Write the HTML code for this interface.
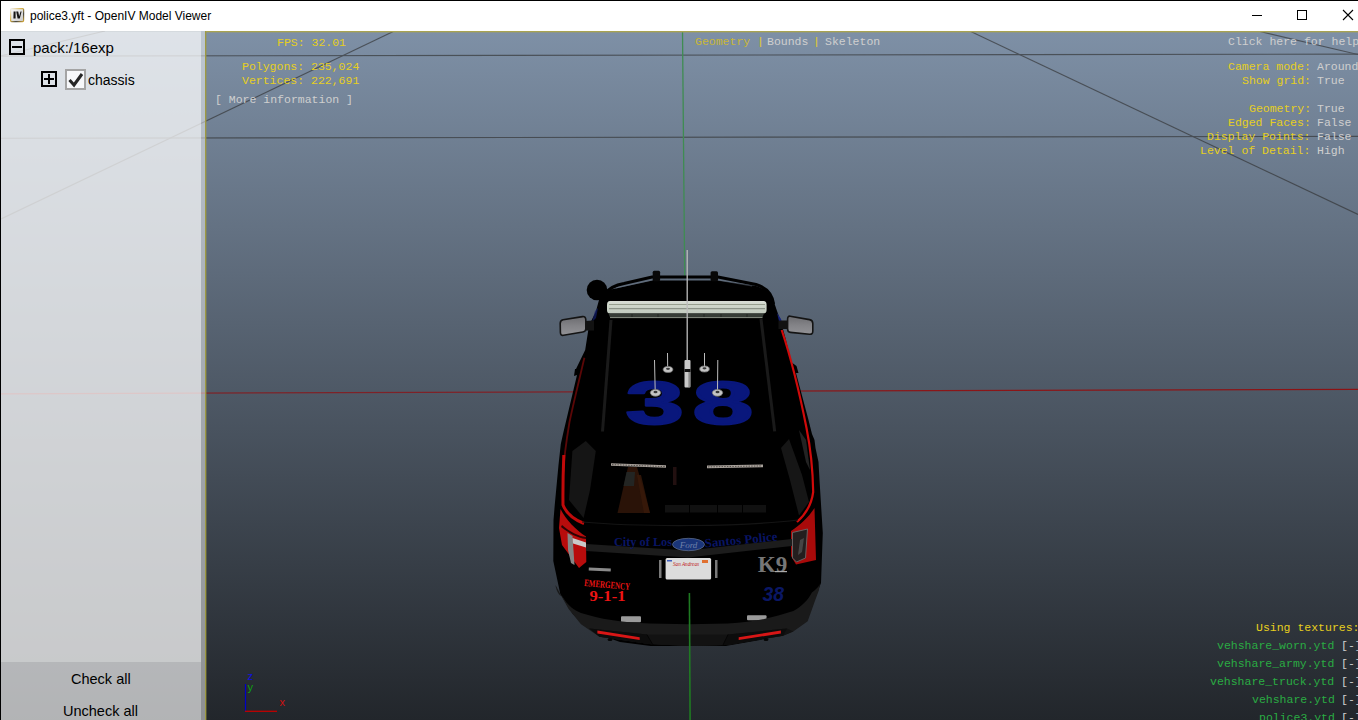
<!DOCTYPE html>
<html><head><meta charset="utf-8">
<style>
html,body{margin:0;padding:0;}
body{width:1358px;height:720px;overflow:hidden;position:relative;background:#fff;font-family:"Liberation Sans",sans-serif;}
.a{position:absolute;white-space:pre;}
.m{position:absolute;white-space:pre;font-family:"Liberation Mono",monospace;font-size:11.5px;line-height:14px;}
.y{color:#e6cf1e;}
.g{color:#cfcfcf;}
.gr{color:#2aac43;}
</style></head><body>
<!-- title bar -->
<div class="a" style="left:0;top:0;width:1358px;height:1px;background:#000"></div>
<div class="a" style="left:0;top:0;width:1px;height:720px;background:#000;z-index:9"></div>
<svg class="a" style="left:10px;top:8px" width="15" height="15" viewBox="0 0 15 15">
  <defs>
    <linearGradient id="icf" x1="0" y1="0" x2="1" y2="1"><stop offset="0" stop-color="#fafafa"/><stop offset="1" stop-color="#c8c8c8"/></linearGradient>
    <linearGradient id="icb" x1="0" y1="0" x2="1" y2="1"><stop offset="0" stop-color="#f0f0f0"/><stop offset="0.45" stop-color="#d8b040"/><stop offset="0.7" stop-color="#444"/><stop offset="1" stop-color="#d4a838"/></linearGradient>
  </defs>
  <rect x="0.6" y="0.6" width="13" height="13" rx="1" fill="url(#icf)" stroke="url(#icb)" stroke-width="1.2"/>
  <path d="M3.6,3.4 L5.6,3.4 L5.6,10.5 L3.4,10.5 Z M6.2,3.4 L8.2,3.4 L9.2,8.2 L10.5,3.4 L11.6,3.4 L9.8,10.5 L7.6,10.5 Z" fill="#151515"/>
</svg>
<div class="a" style="left:30px;top:9px;font-size:12px;color:#000">police3.yft - OpenIV Model Viewer</div>
<!-- window controls -->
<svg class="a" style="left:1240px;top:0" width="118" height="31" viewBox="1240 0 118 31">
  <rect x="1252" y="15" width="10" height="1" fill="#000"/>
  <rect x="1297.5" y="10.5" width="9" height="9" fill="none" stroke="#000" stroke-width="1"/>
  <path d="M1343 10 L1353 20 M1353 10 L1343 20" stroke="#000" stroke-width="1.1"/>
</svg>

<!-- scene -->
<svg class="a" style="left:0;top:31px" width="1358" height="689" viewBox="0 31 1358 689">
  <defs>
    <linearGradient id="bg" gradientUnits="userSpaceOnUse" x1="0" y1="31" x2="0" y2="720">
      <stop offset="0" stop-color="rgb(126,144,166)"/>
      <stop offset="1" stop-color="rgb(34,38,43)"/>
    </linearGradient>
  </defs>
  <rect x="0" y="31" width="1358" height="689" fill="url(#bg)"/>
  <g stroke="#303030" stroke-width="1.15" fill="none" opacity="0.64">
    <line x1="0" y1="56.07" x2="1358" y2="54.13"/>
    <line x1="0" y1="138.27" x2="1358" y2="136.33"/>
    <line x1="0" y1="219.5" x2="394.3" y2="31"/>
    <line x1="970.3" y1="31.3" x2="1358" y2="214.5"/>
    <line x1="0" y1="56" x2="105" y2="31"/>
    <line x1="1258" y1="31" x2="1358" y2="54.5"/>
  </g>
  <linearGradient id="redax" gradientUnits="userSpaceOnUse" x1="0" y1="0" x2="1358" y2="0"><stop offset="0" stop-color="#7a2428"/><stop offset="0.4" stop-color="#7f2127"/><stop offset="0.6" stop-color="#8a1719"/><stop offset="1" stop-color="#8c1214"/></linearGradient>
  <line x1="0" y1="393.79" x2="1358" y2="389.26" stroke="url(#redax)" stroke-width="1.25"/>
  <line x1="682.5" y1="31" x2="684.7" y2="276" stroke="#3f8c52" stroke-width="1.3"/>
  
  <g id="car">
    <defs>
      <linearGradient id="mir" x1="0" y1="0" x2="0" y2="1"><stop offset="0" stop-color="#6c6c70"/><stop offset="0.5" stop-color="#838387"/><stop offset="1" stop-color="#929296"/></linearGradient>
      <linearGradient id="lbar" x1="0" y1="0" x2="0" y2="1"><stop offset="0" stop-color="#d9ded6"/><stop offset="0.4" stop-color="#cdd5c9"/><stop offset="1" stop-color="#c2cbbf"/></linearGradient>
    </defs>
    <!-- body silhouette -->
    <path d="M611,289.5 L652,280.5 L718,280.5 L756,286 C765,289 771,293 773,299 L777,311 L781,322 L786,340 L791,362 L796.5,366 L798.5,373 L796,373 L808.5,420 L812,434 L814.5,440 L815.5,448 L818.5,462 L819.5,480 L822.8,533 L821,583 L816,596 L809,614 L797,626 L786.7,633 L760,640 L725.6,646 L650.6,646 L620,642 L595,633 L589.4,628 L572.8,614 L560.3,594 L553.3,561 L553.5,520 L554.7,505.6 L558.5,465 L560.8,444 L563.6,431.4 L577,375 L574,376 L575,369 L576,368.9 L585.2,350 L589,325.6 L595.8,311.8 L599,300 L603,293 Z" fill="#000000"/>
    <!-- rail -->
    <path d="M606,293 C610,287 616,285 624,283.5 L652,277 L718,277 L756,284.5 C766,287.5 772,293 773.5,304" fill="none" stroke="#000" stroke-width="3.2"/>
    <path d="M616,288 L652,280.2 M718,280.2 L752,286" fill="none" stroke="#6d7888" stroke-width="0.8" opacity="0.55"/>
    <rect x="652.7" y="270.8" width="7.4" height="10.5" rx="1.5" fill="#080808"/>
    <rect x="710.6" y="271.3" width="7.4" height="10" rx="1.5" fill="#080808"/>
    <!-- ball speaker -->
    <circle cx="597" cy="290" r="10.3" fill="#000"/>
    <!-- blue highlights -->
    <path d="M595,311 L598,308 L596,318 L592,322 Z" fill="#101c6a" opacity="0.7"/>
    <path d="M777,313 L781,319 L783,326 L779,321 Z" fill="#14207a"/>
    <!-- mirrors -->
    <path d="M584,321 L594,320.5 L594,330.5 L584,330.5 Z" fill="#121212"/>
    <path d="M778.5,320.5 L788,320.5 L788,329 L778.5,329 Z" fill="#121212"/>
    <path d="M563,319.8 L582.5,316.6 Q585.6,316.2 585.8,319.5 L585.8,329 Q585.8,331.6 582.8,332 L563.5,335.3 Q560.5,335.8 560.4,332.5 L560.2,323.5 Q560.2,320.3 563,319.8 Z" fill="url(#mir)" stroke="#141414" stroke-width="1.6"/>
    <path d="M790.2,316.2 L809.5,319.6 Q812.8,320.2 812.8,323.5 L812.8,331.2 Q812.8,334.6 809.5,334.3 L790.5,332.4 Q787.6,332.2 787.6,329 L787.6,319.2 Q787.6,315.8 790.2,316.2 Z" fill="url(#mir)" stroke="#141414" stroke-width="1.6"/>
    <!-- light bar -->
    <path d="M610,301 L763.5,301 Q766.6,301.2 766.6,305 L766.6,310 Q766.6,313.6 763,313.6 L610,313.6 Q607,313.6 607,310 L607,305 Q607,301 610,301 Z" fill="url(#lbar)"/>
    <line x1="609" y1="304.5" x2="765" y2="304.5" stroke="#88907f" stroke-width="0.8"/>
    <line x1="609" y1="308.7" x2="765" y2="308.7" stroke="#8c9489" stroke-width="1.3"/>
    <path d="M608.5,313.6 L764,313.6 L762.5,317.2 L610,317.2 Z" fill="#363c36"/>
    <g stroke="#1e221e" stroke-width="0.8"><line x1="632" y1="314" x2="632" y2="317"/><line x1="658" y1="314" x2="658" y2="317"/><line x1="704" y1="314" x2="704" y2="317"/><line x1="721" y1="314" x2="721" y2="317"/><line x1="747" y1="314" x2="747" y2="317"/></g>
    <line x1="610" y1="317.6" x2="762.5" y2="317.6" stroke="#98a094" stroke-width="0.9"/>
    <!-- roof creases -->
    <path d="M611,320 L602.5,431.5" stroke="#1a1a1a" stroke-width="3" fill="none"/>
    <path d="M761,319 L774.7,431.4" stroke="#1a1a1a" stroke-width="3" fill="none"/>
    <!-- side red strips upper -->
    
    
    <!-- 38 roof -->
    <g fill="#09177c" stroke="#09177c" stroke-width="2" stroke-linejoin="round">
      <text x="0" y="0" font-family="Liberation Sans" font-weight="bold" font-size="61.4" transform="translate(625.6,424) scale(1.71,1)">3</text>
      <text x="0" y="0" font-family="Liberation Sans" font-weight="bold" font-size="61.4" transform="translate(692.5,424) scale(1.78,1)">8</text>
    </g>
    <!-- C pillar panels -->
    <path d="M585.8,441 L595.8,451 L590,490 L583.6,518 L569,500 L572.4,451 Z" fill="#151515"/>
    <path d="M781,448 L789,439 L802,475 L809,502 L799,515.6 L790,480 Z" fill="#161616"/>
    <!-- rear window inner (slightly lighter glass) -->
    
    <!-- traffic cone dim -->
    <path d="M617.5,513 L628,467 L637,467 L650,513 Z" fill="#2a1308"/>
    <path d="M626.5,472 L635,472 L634,486 L623.5,486 Z" fill="#222a2a" opacity="0.8"/>
    <path d="M637,475 L641,475 L650,513 L644,513 Z" fill="#3a1a0a" opacity="0.8"/>
    <path d="M673,467 L676.5,467 L676.5,485 L673,485 Z" fill="#2a1414" opacity="0.8"/>
    <g fill="#111111"><rect x="665" y="505" width="24" height="7.5"/><rect x="690" y="505" width="27" height="7.5"/><rect x="718" y="505" width="24" height="7.5"/><rect x="743" y="505" width="23" height="7.5"/></g>
    <!-- LED bars -->
    <path d="M611,463.2 L666,465.3 L666,467.8 L611,465.8 Z" fill="#a9a29c"/>
    <path d="M707,465.6 L763,464.6 L763,467.2 L707,468.2 Z" fill="#a9a29c"/>
    <path d="M612,464.6 L665,466.6" stroke="#4a4540" stroke-width="0.9" stroke-dasharray="1.5 1.2"/>
    <path d="M708,466.9 L762,465.9" stroke="#4a4540" stroke-width="0.9" stroke-dasharray="1.5 1.2"/>
    <!-- red side strips -->
    <path d="M781.7,330 C790,355 800,395 806.5,428 C810.5,448 812.8,470 813.2,492 C811.5,505 806,514 797,522" fill="none" stroke="#d00a0a" stroke-width="2.2"/>
    <path d="M799,430 L806,440 L810,470 L806,462 Z" fill="#3a3a3a" opacity="0.6"/>
    <path d="M584.4,357.8 C578,385 573,405 569.5,422 C566.5,440 564,458 563.3,472" fill="none" stroke="#5a0707" stroke-width="1.8"/>
    <path d="M563.8,455 C563,475 562.8,490 563,505 C566.5,514 575,520 584,523.5" fill="none" stroke="#c00a0a" stroke-width="3"/>
    <!-- tail lights -->
    
    
    <path d="M560.5,509 C566,520 576,530 586,536.5 L586.3,562 L579,568 L562,545 L559,528 Z" fill="#b80c0c"/>
    <path d="M567.5,533 L572.5,536 L574.5,565 L571,563 L568,550 Z" fill="#858585"/>
    <path d="M572.5,538 L586,542.5 L586,547.5 L573,543.5 Z" fill="#c9c9c9"/>
    <path d="M562,525 C570,532 578,536 586,537 L586,539 C577,538 569,533 561,527 Z" fill="#2a0404"/>
    
    
    <path d="M814.5,508 L816,560 L796,564.5 L791,556 L791,531 C800,525 808,518 814.5,508 Z" fill="#a80a0a"/>
    <path d="M792.5,532.5 L807.5,529 L805.5,558 L796.5,562 L792.5,558 Z" fill="#241e1e" stroke="#6a6a6a" stroke-width="0.9"/>
    <path d="M800,540 L804,538 L802,552 L798,555 Z" fill="#555" opacity="0.7"/>
    <!-- trim band & text -->
    <path d="M586,544 L688,550.5 L792,539 L792,546 L688,557.5 L586,551 Z" fill="#1c1c1c"/>
    <path d="M582,522 C640,527 740,527 798,520" fill="none" stroke="#141414" stroke-width="1.2"/>
    <text x="614" y="545.5" font-family="Liberation Serif" font-weight="bold" font-size="12.5" fill="#091564" textLength="58" lengthAdjust="spacingAndGlyphs">City of Los</text>
    <text x="0" y="0" font-family="Liberation Serif" font-weight="bold" font-size="12.5" fill="#091564" textLength="73" lengthAdjust="spacingAndGlyphs" transform="translate(705,547.5) rotate(-5.5)">Santos Police</text>
    <ellipse cx="688.5" cy="544.5" rx="16" ry="6.2" fill="#1a357a" stroke="#5a6a8a" stroke-width="0.8"/>
    <text x="688.5" y="547.5" text-anchor="middle" font-family="Liberation Serif" font-style="italic" font-size="9" fill="#6f80a8">Ford</text>
    <!-- plate -->
    <rect x="659" y="560" width="2.5" height="18" fill="#7a7a7a"/>
    <rect x="715" y="560" width="2.5" height="18" fill="#7a7a7a"/>
    <rect x="665.6" y="558" width="45.5" height="21.5" rx="1.5" fill="#dcdcdc"/>
    <text x="673" y="566" font-family="Liberation Serif" font-style="italic" font-size="6.5" fill="#c02020" textLength="26" lengthAdjust="spacingAndGlyphs">San Andreas</text>
    <rect x="702" y="560" width="6" height="3" fill="#e07030"/>
    <rect x="667" y="560" width="5" height="1.5" fill="#4060c0"/>
    <!-- badges -->
    <rect x="588.8" y="568" width="22" height="3" fill="#8a8a8a" transform="rotate(3 600 569)"/>
    <rect x="621" y="616.3" width="20" height="6" rx="1" fill="#9a9a9a"/>
    <rect x="747" y="615.3" width="19.5" height="5" rx="1" fill="#9a9a9a"/>
    <text x="0" y="0" font-family="Liberation Serif" font-weight="bold" font-size="10" fill="#ee1414" textLength="46" lengthAdjust="spacingAndGlyphs" transform="translate(584,586) rotate(5)">EMERGENCY</text>
    <text x="589.5" y="600.5" font-family="Liberation Serif" font-weight="bold" font-size="15" fill="#ee1414" textLength="36" lengthAdjust="spacingAndGlyphs">9-1-1</text>
    <text x="757.8" y="571.8" font-family="Liberation Serif" font-weight="bold" font-size="23" fill="#767676" textLength="29.5" lengthAdjust="spacingAndGlyphs">K9</text>
    <rect x="775" y="571" width="12" height="1.2" fill="#aaa"/>
    <text x="762.5" y="601" font-family="Liberation Sans" font-weight="bold" font-style="italic" font-size="20.5" fill="#0a1764" textLength="21.5" lengthAdjust="spacingAndGlyphs">38</text>
    <!-- lower body lighter band -->
    <path d="M555.5,585 C556,590 559,596 562.4,596.5 C568,606 574,610 581,613 C600,619 620,622.3 650,623.5 L689,624.3 L728,623.5 C756,622 775,617 793.3,611 C802,606 808,600 811.9,592.4 C815,590 818,588 819.8,584 L819,590 L816,598 L807.7,621.2 L793.3,631.5 L783,635.7 L727.3,645 L689,646 L649,643.9 L599.5,636.7 L590.2,630.5 L581,624.3 L568.6,608.9 L560.3,594 Z" fill="#1a1a1a"/>
    <!-- bumper -->
    <path d="M589.2,628.5 L646.9,634.6 L728,634.6 L787,628.5 L793.3,631.5 L783,635.7 L727.3,645 L689,646 L649,643.9 L599.5,636.7 Z" fill="#121212"/>
    <path d="M589.2,628.5 L646.9,634.6 L653,645 L649,643.9 L599.5,636.7 Z" fill="#0c0c0c"/>
    <path d="M787,628.5 L728,634.6 L723,645 L727.3,645 L783,635.7 Z" fill="#0c0c0c"/>
    <path d="M646.9,634.6 L653,645 M728,634.6 L723,645" stroke="#050505" stroke-width="1"/>
    <path d="M597.4,630.5 L639.7,637.3 L639.7,640 L597.4,633.5 Z" fill="#d81616"/>
    <path d="M738.7,637.3 L780.9,630.5 L780.9,633.5 L738.7,640 Z" fill="#d81616"/>
    <ellipse cx="610" cy="639.5" rx="2.5" ry="1.5" fill="#050505"/>
    <ellipse cx="766" cy="639.5" rx="2.5" ry="1.5" fill="#050505"/>
    <!-- antennas -->
    <g stroke="#bdbdbd" fill="none">
      <line x1="687.2" y1="250" x2="687.2" y2="362" stroke-width="1.3"/>
      <line x1="654.5" y1="360" x2="655.2" y2="391" stroke-width="1"/>
      <line x1="667.5" y1="353" x2="667.7" y2="368" stroke-width="1"/>
      <line x1="704.5" y1="353" x2="704.5" y2="368" stroke-width="1"/>
      <line x1="717.8" y1="360" x2="717.5" y2="391" stroke-width="1"/>
    </g>
    <rect x="684.5" y="360" width="6" height="27.5" rx="1" fill="#c9c9c9"/>
    <rect x="684.5" y="369" width="6" height="3" fill="#111"/>
    <rect x="688.5" y="372" width="1.3" height="15" fill="#7a7a7a"/>
    <g fill="#c4c4c4" stroke="#7a7a7a" stroke-width="0.8">
      <ellipse cx="655.5" cy="392.8" rx="5.2" ry="3.4"/>
      <ellipse cx="668" cy="369.5" rx="4.8" ry="3"/>
      <ellipse cx="704.5" cy="369" rx="4.8" ry="3"/>
      <ellipse cx="717.5" cy="392.8" rx="5.2" ry="3.4"/>
    </g>
    <g fill="#3a3a3a">
      <ellipse cx="655.5" cy="392" rx="2" ry="1.2"/>
      <ellipse cx="668" cy="368.8" rx="2" ry="1.1"/>
      <ellipse cx="704.5" cy="368.3" rx="2" ry="1.1"/>
      <ellipse cx="717.5" cy="392" rx="2" ry="1.2"/>
    </g>
  </g>

  <line x1="689.4" y1="593" x2="690.1" y2="720" stroke="#1f7a22" stroke-width="1.6"/>
  <!-- gizmo -->
  <line x1="245.5" y1="684" x2="245.5" y2="711.5" stroke="#0000c8" stroke-width="1.2"/>
  <line x1="245" y1="711.3" x2="277" y2="711.3" stroke="#c00000" stroke-width="1.3"/>
</svg>
<div class="a" style="left:247.5px;top:669.5px;font-size:11px;color:#1010e0">z</div>
<div class="a" style="left:247.5px;top:681px;font-size:11px;color:#10a010">y</div>
<div class="a" style="left:279.5px;top:696px;font-size:11px;color:#d01010">x</div>

<!-- viewport yellow border -->
<div class="a" style="left:205px;top:31px;width:1153px;height:1px;background:#a9a451"></div>
<div class="a" style="left:206px;top:32px;width:1152px;height:1px;background:rgba(169,164,81,0.35)"></div>
<div class="a" style="left:205px;top:31px;width:1px;height:689px;background:#9d9943"></div>
<div class="a" style="left:206px;top:32px;width:1px;height:688px;background:rgba(157,153,67,0.38)"></div>

<!-- left panel overlay -->
<div class="a" style="left:1px;top:31px;width:200px;height:631px;background:rgba(255,255,255,0.745)"></div>
<div class="a" style="left:1px;top:31px;width:200px;height:1px;background:rgba(0,0,0,0.04)"></div>
<div class="a" style="left:1px;top:662px;width:200px;height:58px;background:rgba(255,255,255,0.655)"></div>
<div class="a" style="left:201px;top:31px;width:4px;height:689px;background:rgba(255,255,255,0.49)"></div>

<!-- tree -->
<div class="a" style="left:9px;top:39px;width:12px;height:12px;border:2px solid #000"></div>
<div class="a" style="left:12px;top:46px;width:10px;height:2px;background:#000"></div>
<div class="a" style="left:33px;top:39px;font-size:15px;color:#000">pack:/16exp</div>
<div class="a" style="left:41px;top:71px;width:12px;height:12px;border:2px solid #000"></div>
<div class="a" style="left:44px;top:78px;width:10px;height:2px;background:#000"></div>
<div class="a" style="left:48px;top:74px;width:2px;height:10px;background:#000"></div>
<div class="a" style="left:65px;top:69px;width:17px;height:17px;border:2px solid #a4a4a4;background:#f7f8fa"></div>
<svg class="a" style="left:65px;top:69px" width="21" height="21" viewBox="0 0 21 21">
  <path d="M4.5 11 L9 16 L17 5" fill="none" stroke="#262626" stroke-width="3"/>
</svg>
<div class="a" style="left:88px;top:72px;font-size:14px;color:#000">chassis</div>

<div class="a" style="left:71px;top:671px;font-size:14.5px;color:#000">Check all</div>
<div class="a" style="left:63px;top:703px;font-size:14.5px;color:#000">Uncheck all</div>

<!-- overlay texts -->
<div class="m y" style="left:277px;top:36px">FPS: 32.01</div>
<div class="m y" style="left:242px;top:60px">Polygons: 235,024</div>
<div class="m y" style="left:242px;top:74px">Vertices: 222,691</div>
<div class="m g" style="left:215px;top:93px">[ More information ]</div>

<div class="m" style="left:695px;top:35px;color:#c9b736">Geometry</div>
<div class="m y" style="left:757px;top:35px">|</div>
<div class="m g" style="left:767px;top:35px">Bounds</div>
<div class="m y" style="left:813px;top:35px">|</div>
<div class="m g" style="left:825px;top:35px">Skeleton</div>

<div class="m g" style="left:1228px;top:35px">Click here for help</div>
<div class="m y" style="left:1228px;top:60px;">Camera mode:</div><div class="m g" style="left:1317px;top:60px">Around</div>
<div class="m y" style="left:1242px;top:74px;">Show grid:</div><div class="m g" style="left:1317px;top:74px">True</div>
<div class="m y" style="left:1249px;top:102px;">Geometry:</div><div class="m g" style="left:1317px;top:102px">True</div>
<div class="m y" style="left:1228px;top:116px;">Edged Faces:</div><div class="m g" style="left:1317px;top:116px">False</div>
<div class="m y" style="left:1207px;top:130px;">Display Points:</div><div class="m g" style="left:1317px;top:130px">False</div>
<div class="m y" style="left:1200px;top:144px;">Level of Detail:</div><div class="m g" style="left:1317px;top:144px">High</div>

<div class="m y" style="left:1256px;top:621px">Using textures:</div>
<div class="m gr" style="left:1217px;top:639px">vehshare_worn.ytd</div><div class="m g" style="left:1341px;top:639px">[-]</div>
<div class="m gr" style="left:1217px;top:657px">vehshare_army.ytd</div><div class="m g" style="left:1341px;top:657px">[-]</div>
<div class="m gr" style="left:1210px;top:675px">vehshare_truck.ytd</div><div class="m g" style="left:1341px;top:675px">[-]</div>
<div class="m gr" style="left:1252px;top:693px">vehshare.ytd</div><div class="m g" style="left:1341px;top:693px">[-]</div>
<div class="m gr" style="left:1259px;top:711px">police3.ytd</div><div class="m g" style="left:1341px;top:711px">[-]</div>
</body></html>
